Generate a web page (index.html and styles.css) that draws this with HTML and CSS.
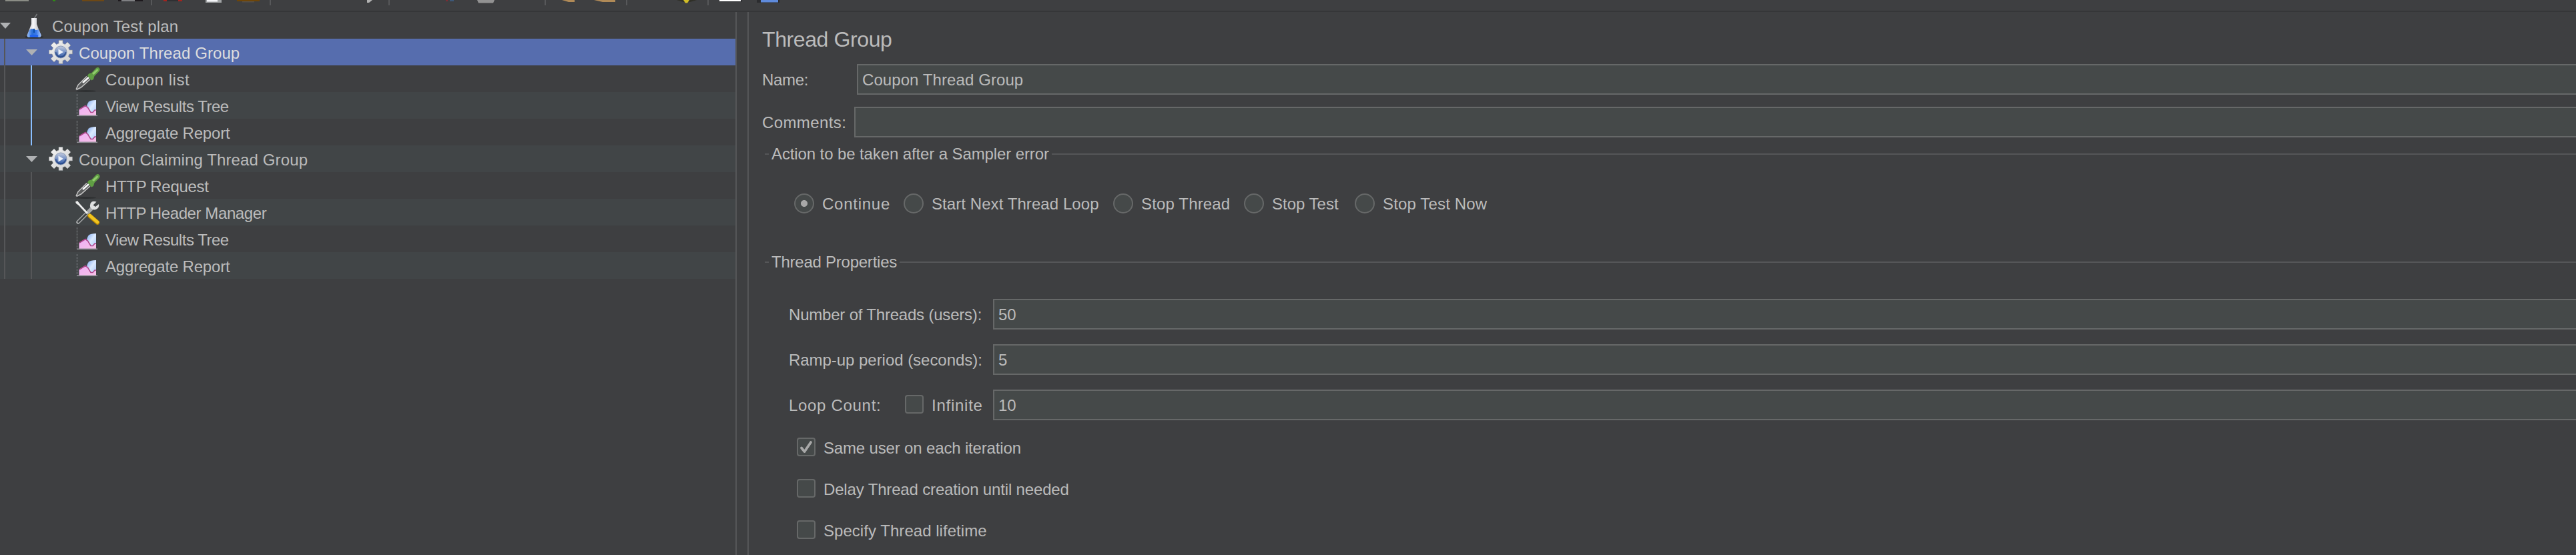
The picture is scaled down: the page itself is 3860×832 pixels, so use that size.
FILE: index.html
```html
<!DOCTYPE html>
<html lang="en">
<head>
<meta charset="utf-8">
<title>Coupon Test plan</title>
<link rel="stylesheet" href="styles.css">
</head>
<body>
<svg class="defs" width="0" height="0">
  <defs>
    <linearGradient id="steel" x1="0" y1="0" x2="1" y2="1"><stop offset="0" stop-color="#f4f4f4"/><stop offset="1" stop-color="#cfcfcf"/></linearGradient>
    <linearGradient id="glass" x1="0" y1="0" x2="1" y2="0"><stop offset="0" stop-color="#b9b9c2"/><stop offset=".45" stop-color="#f8f8fb"/><stop offset="1" stop-color="#a9abb3"/></linearGradient>
    <linearGradient id="liquid" x1="0" y1="0" x2="1" y2="0"><stop offset="0" stop-color="#9cc0fa"/><stop offset=".35" stop-color="#2b6fd8"/><stop offset=".65" stop-color="#3a79e8"/><stop offset="1" stop-color="#a8c8ff"/></linearGradient>
    <linearGradient id="hub" x1="0" y1="0" x2="0" y2="1"><stop offset="0" stop-color="#c3cbdc"/><stop offset=".55" stop-color="#6f8cc4"/><stop offset="1" stop-color="#27509c"/></linearGradient>
    <linearGradient id="area" x1="0" y1="0" x2="1" y2="1"><stop offset="0" stop-color="#eeb0f6"/><stop offset="1" stop-color="#f6c0e6"/></linearGradient>
    <linearGradient id="sky" x1="0" y1="0" x2="1" y2="1"><stop offset="0" stop-color="#7aa6f0"/><stop offset=".5" stop-color="#dceaff"/><stop offset="1" stop-color="#a9c9fa"/></linearGradient>
    <symbol id="flask" viewBox="0 0 36 38">
      <ellipse cx="18" cy="35.500" rx="14" ry="2" fill="#2c2d2f"/>
      <path d="M18 8L22.500 1" stroke="#77797c" stroke-width="1.600"/>
      <path d="M14 7h8v9l6 16q1 4-3 4H11q-4 0-3-4l6-16z" fill="url(#glass)"/>
      <path d="M11 25q3-3 7-1t7 0l3.500 8q1 4-3.500 4H11q-4.500 0-3-4z" fill="url(#liquid)"/>
      <path d="M12 34h12" stroke="#1f60f0" stroke-width="3"/>
      <path d="M18 23v6" stroke="#0d4da8" stroke-width="2"/>
    </symbol>
    <symbol id="gear" viewBox="0 0 36 36">
      <path fill="url(#steel)" stroke="#8f9296" stroke-width=".6" d="M15 .5h6V5l3.500 1.500L28 3l5 5-3.500 3.500L31 15h4.500v6H31l-1.500 3.500L33 28l-5 5-3.500-3.500L21 31v4.500h-6V31l-3.500-1.500L8 33l-5-5 3.500-3.500L5 21H.5v-6H5l1.500-3.500L3 8l5-5 3.500 3.500L15 5z"/>
      <circle cx="18" cy="18" r="9" fill="url(#hub)" stroke="#8a98b4" stroke-width="1"/>
      <path d="M10.500 18a7.500 7.500 0 0 0 15 0" fill="none" stroke="#1f3f7d" stroke-width="2" stroke-opacity=".6"/>
      <path d="M14.500 13.500l7.500 4.500-7.500 4.500z" fill="#eef3fb"/>
    </symbol>
    <symbol id="dropper" viewBox="0 0 38 38">
      <ellipse cx="17" cy="36.500" rx="15" ry="1.400" fill="#2e3032"/>
      <path d="M1.500 34.500L4 28 18 14l5.500 5.500L10 31z" fill="#5b5c5d"/>
      <path d="M2 34L5 27.500 18 14.500M2.500 34.500L9.500 31 23 19" fill="none" stroke="#c4c4c4" stroke-width="1.500"/>
      <path d="M12 24l9-8" stroke="#fafafa" stroke-width="2.600"/>
      <path d="M21 10.500l4-1L32 2q3-2 5 .5 1.500 2.500-1 5L29.500 14l-1.500 5-3 1.500-6-7z" fill="#609e44"/>
      <path d="M26 10l7.500-6.500 2 1.500-7 7z" fill="#92cc6e"/>
    </symbol>
    <symbol id="tools" viewBox="0 0 38 38">
      <path d="M5 33L27 11" stroke="#a6a8a9" stroke-width="5.500" stroke-linecap="round"/>
      <path d="M5.500 32.500L18 20" stroke="#3e4244" stroke-width="2.800" stroke-linecap="round"/>
      <path d="M32.500 2.500Q26 0 23.500 5 22 8.500 24 12l3 2q5 1.500 8.500-3 1.500-3 .500-5L31 10l-3.500-2.500z" fill="#dfe1e2"/>
      <path d="M1 2.500L4 1l4 5 12 13-2 2L6 8 2 5z" fill="#eceded"/>
      <path d="M22.500 23.500L34 33.500" stroke="#b88505" stroke-width="6.500" stroke-linecap="round"/>
      <path d="M22.500 23L34 33" stroke="#f1c51f" stroke-width="4.600" stroke-linecap="round"/>
    </symbol>
    <symbol id="chart" viewBox="0 0 36 36">
      <path d="M2.500 1v32" stroke="#6a6d70" stroke-width="1.500" stroke-dasharray="3 1.500"/>
      <path d="M31 10v20h-9l-5-8q0-6 3-9.500 2.500-2.500 11-2.500z" fill="url(#sky)"/>
      <path d="M5.500 33v-9l4-2 5-3.500 4 3L23 28h3l3-3h2v8z" fill="url(#area)"/>
      <path d="M6 24l4-2.500 5-3 3.500 2.500 4.500 7.500h3l3-3.500h2" fill="none" stroke="#b04a8e" stroke-width="1.600"/>
      <path d="M2 33.300h31" stroke="#8f8f95" stroke-width="1.600"/>
    </symbol>
  </defs>
</svg>

<div class="toolbar">
  <svg width="1200" height="16" viewBox="0 0 1200 16">
    <path d="M8 0h35v2H8z" fill="#8b8d86"/>
    <path d="M79 0h4v2h-4z" fill="#2f8a15"/>
    <path d="M123 0h33v2h-33z" fill="#6d4815"/>
    <path d="M177 0h37v2h-37z" fill="#1d191d"/><path d="M182 0h20v2h-20z" fill="#7f8083"/>
    <path d="M250 0h17v2h-17z" fill="#303033"/><path d="M245 0h5v2h-5zM267 0h6v2h-6z" fill="#a3241f"/>
    <path d="M308 0h24v4h-24z" fill="#a0a3a4"/><path d="M310 0h16v2.500h-16z" fill="#f4f5f8"/>
    <path d="M355 0h34v2h-34z" fill="#6d4508"/><path d="M363 2h18v1.500h-18z" fill="#55514c"/>
    <path d="M550 0h8l-5 4h-3z" fill="#b2b2b2"/>
    <path d="M668 0h3v2h-3z" fill="#7c2d35"/><path d="M674 0h6v2h-6z" fill="#3d5878"/>
    <path d="M715 0h26l-2 4.500h-22z" fill="#929292"/>
    <path d="M842 0h19v3h-9z" fill="#b08a57"/><path d="M890 0h32v3h-19z" fill="#b08a57"/>
    <path d="M1014 0h30l-10 3h-10z" fill="#303028"/><path d="M1024 0h9l-3 4.500h-3z" fill="#d1bd27"/>
    <path d="M1078 0h34v3h-34z" fill="#303134"/><path d="M1078 0h32v2h-32z" fill="#fff"/>
    <path d="M1134 0h34v4h-34z" fill="#2b2c2f"/><path d="M1140 0h26v3.500h-26z" fill="#5f8bdc"/>
    <path d="M226 0h2v8h-2zM404 0h2v8h-2zM582 0h2v8h-2zM816 0h2v8h-2zM938 0h2v8h-2zM1060 0h2v8h-2z" fill="#57585a"/>
  </svg>
</div>

<div class="main">
  <div class="tree">
    <div class="row root"><svg class="arrow"><path d="M0 0h16l-8 9z"/></svg><svg class="icon flask"><use href="#flask"/></svg><span class="t1">Coupon Test plan</span></div>
    <div class="branch">
      <div class="row group selected"><svg class="arrow"><path d="M0 0h17l-8.500 9z"/></svg><svg class="icon"><use href="#gear"/></svg><span class="t2">Coupon Thread Group</span></div>
      <div class="leaves active">
        <div class="row leaf"><svg class="icon wide"><use href="#dropper"/></svg><span class="t3">Coupon list</span></div>
        <div class="row leaf"><svg class="icon"><use href="#chart"/></svg><span class="t4">View Results Tree</span></div>
        <div class="row leaf"><svg class="icon"><use href="#chart"/></svg><span class="t5">Aggregate Report</span></div>
      </div>
      <div class="row group alt"><svg class="arrow"><path d="M0 0h17l-8.500 9z"/></svg><svg class="icon"><use href="#gear"/></svg><span class="t6">Coupon Claiming Thread Group</span></div>
      <div class="leaves">
        <div class="row leaf"><svg class="icon wide"><use href="#dropper"/></svg><span class="t7">HTTP Request</span></div>
        <div class="row leaf"><svg class="icon wide"><use href="#tools"/></svg><span class="t8">HTTP Header Manager</span></div>
        <div class="row leaf"><svg class="icon"><use href="#chart"/></svg><span class="t4">View Results Tree</span></div>
        <div class="row leaf"><svg class="icon"><use href="#chart"/></svg><span class="t5">Aggregate Report</span></div>
      </div>
    </div>
  </div>
  <div class="divider"></div>
  <div class="panel">
    <h1 class="title">Thread Group</h1>
    <div class="line name"><label class="f1">Name:</label><div class="field t2">Coupon Thread Group</div></div>
    <div class="line comments"><label class="f2">Comments:</label><div class="field"></div></div>
    <div class="legend action"><span class="f3">Action to be taken after a Sampler error</span></div>
    <div class="radios">
      <div class="option"><i class="radio on"></i><span class="r1">Continue</span></div>
      <div class="option"><i class="radio"></i><span class="r2">Start Next Thread Loop</span></div>
      <div class="option"><i class="radio"></i><span class="r3">Stop Thread</span></div>
      <div class="option"><i class="radio"></i><span>Stop Test</span></div>
      <div class="option"><i class="radio"></i><span class="r3">Stop Test Now</span></div>
    </div>
    <div class="legend props"><span class="f4">Thread Properties</span></div>
    <div class="properties">
      <div class="line"><label class="p1">Number of Threads (users):</label><div class="field">50</div></div>
      <div class="line"><label class="p2">Ramp-up period (seconds):</label><div class="field">5</div></div>
      <div class="line"><label class="p3">Loop Count:</label><div class="option infinite"><i class="check"></i><span class="p4">Infinite</span></div><div class="field">10</div></div>
    </div>
    <div class="checks">
      <div class="option"><i class="check"><svg viewBox="0 0 24 24"><path d="M5 13.500l4.500 5.500L19 5"/></svg></i><span class="c1">Same user on each iteration</span></div>
      <div class="option"><i class="check"></i><span class="c1">Delay Thread creation until needed</span></div>
      <div class="option"><i class="check"></i><span class="c2">Specify Thread lifetime</span></div>
    </div>
  </div>
</div>
</body>
</html>
```
FILE: styles.css
```css
* { box-sizing: border-box; }

body {
  margin: 0;
  width: 3860px;
  height: 832px;
  overflow: hidden;
  background: #3e3f41;
  color: #bbbbbb;
  font: 24px/44px "Liberation Sans", Arial, sans-serif;
  white-space: nowrap;
}

.defs { position: absolute; }

.toolbar { height: 18px; border-bottom: 2px solid #353638; }
.toolbar svg { display: block; }

.main { display: flex; height: 814px; }

/* Tree */
.tree { width: 1102px; }
.row { display: flex; height: 40px; }
.row .arrow { width: 17px; height: 9px; margin-top: 16px; fill: #afb1b3; }
.row .icon { width: 36px; height: 36px; margin: 2px 9px 0 0; flex: none; }
.row .icon.wide { width: 38px; height: 38px; margin: 2px 8px 0 -1px; }
.row .icon.flask { height: 38px; margin: 2px 9px 0 16px; }
.group { padding-left: 39px; }
.group .icon { margin-left: 17px; }
.leaf { padding-left: 113px; }
.row.selected { background-color: #566dae; color: #dedede; }
.row.alt { background-color: #414547; }
.leaves .row:nth-child(even) { background-color: #414547; }

/* Indent guides run down the left edge of each nested level */
.branch .row { background-image: linear-gradient(#555658, #555658); background-position: 6px 0; background-size: 2px 100%; background-repeat: no-repeat; }
.branch .leaves .row { background-image: linear-gradient(#555658, #555658), linear-gradient(#555658, #555658); background-position: 6px 0, 46px 0; }
.branch .leaves.active .row { background-image: linear-gradient(#555658, #555658), linear-gradient(#8abfff, #8abfff); }

.divider { width: 20px; flex: none; border: solid #555658; border-width: 0 2px; }

/* Editor panel */
.panel { flex: 1; padding: 21px 0 0 19px; }
.title { margin: 0 0 17px; padding-left: 1px; font-size: 32px; line-height: 40px; font-weight: normal; letter-spacing: -.4px; }

.line { display: flex; height: 46px; line-height: 48px; }
.line label { padding-left: 1px; }
.field {
  flex: 1;
  height: 46px;
  padding-left: 6px;
  line-height: 44px;
  background: #454949;
  border: 2px solid #666868;
  border-right: 0;
}
.name label { width: 143px; }
.comments { margin-top: 18px; }
.comments label { width: 139px; }

.legend { display: flex; align-items: center; height: 40px; padding-left: 5px; }
.legend::before, .legend::after { content: ""; height: 2px; background: #555658; }
.legend::before { width: 6px; margin-right: 4px; }
.legend::after { flex: 1; margin-left: 4px; }
.action { margin-top: 5px; line-height: 40px; }
.props { margin-top: 48px; line-height: 42px; }

.option { display: flex; align-items: center; gap: 12px; height: 40px; }
.radios {
  display: grid;
  grid-template-columns: 164px 314px 196px 166px auto;
  margin-top: 34px;
  padding-left: 49px;
  line-height: 40px;
}
.radios span { padding-top: 1px; }
.radio { width: 30px; height: 30px; flex: none; border: 2px solid #666868; border-radius: 50%; background: #454949; }
.radio.on { background: radial-gradient(circle, #a8a8a8 4.600px, #454949 5.400px); }

.properties { display: grid; row-gap: 22px; margin-top: 35px; padding-left: 40px; }
.properties label { width: 307px; }
.properties .p3 { width: 175px; }
.infinite { width: 132px; margin-top: 2px; line-height: 44px; }
.infinite span { padding-top: 3px; }

.check { width: 28px; height: 28px; flex: none; border: 2px solid #666868; border-radius: 4px; background: #454949; }
.check svg { display: block; width: 24px; height: 24px; }
.check path { fill: none; stroke: #a8a8a8; stroke-width: 3.800; stroke-linecap: round; stroke-linejoin: round; }
.checks { display: grid; row-gap: 22px; margin-top: 20px; padding-left: 53px; line-height: 44px; }
.checks span { padding-top: 3px; }

/* Per-label tracking */
.t1 { letter-spacing: .19px; }
.t2 { letter-spacing: .08px; }
.t3 { letter-spacing: .56px; }
.t4 { letter-spacing: -.49px; }
.t5 { letter-spacing: -.19px; }
.t6 { letter-spacing: .12px; }
.t7 { letter-spacing: -.31px; }
.t8 { letter-spacing: -.41px; }
.f1 { letter-spacing: -.3px; }
.f2 { letter-spacing: .4px; }
.f3 { letter-spacing: -.11px; }
.f4 { letter-spacing: -.24px; }
.r1 { letter-spacing: .74px; }
.r2 { letter-spacing: .07px; }
.r3 { letter-spacing: .15px; }
.p1 { letter-spacing: -.2px; }
.p2 { letter-spacing: -.04px; }
.p3 { letter-spacing: .69px; }
.p4 { letter-spacing: .74px; }
.c1 { letter-spacing: -.16px; }
.c2 { letter-spacing: .04px; }
```
